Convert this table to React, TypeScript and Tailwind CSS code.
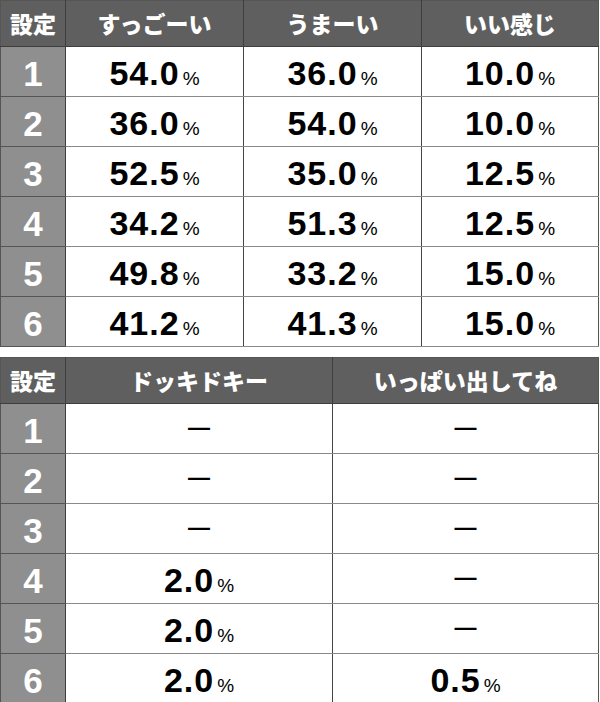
const topRows = [
  ["54.0", "36.0", "10.0"],
  ["36.0", "54.0", "10.0"],
  ["52.5", "35.0", "12.5"],
  ["34.2", "51.3", "12.5"],
  ["49.8", "33.2", "15.0"],
  ["41.2", "41.3", "15.0"],
];

const bottomRows = [
  [null, null],
  [null, null],
  [null, null],
  ["2.0", null],
  ["2.0", null],
  ["2.0", "0.5"],
];

const jp = "font-['Noto_Sans_CJK_JP',sans-serif]";
const num = "font-['Liberation_Sans',Arial,sans-serif]";

function Value({ v }: { v: string | null }) {
  if (!v) {
    return <span className={`${num} inline-block text-[22px] font-bold leading-none text-black`}>—</span>;
  }
  return (
    <span className="inline-flex items-baseline pt-[4px]">
      <span className={`${num} text-[34px] font-bold leading-none tracking-[0.03em] text-black`}>{v}</span>
      <span className={`${num} ml-[3px] text-[19px] leading-none text-black`}>%</span>
    </span>
  );
}

function HeaderCell({ label, last }: { label: string; last?: boolean }) {
  return (
    <th
      className={`h-[46px] border-b border-[#3e3e3e] bg-[#5f5f5f] p-0 text-center ${last ? "" : "border-r"} border-r-[#3e3e3e] ${jp} text-[23px] font-black text-white`}
    >
      {label}
    </th>
  );
}

function Table({ headers, rows, widths }: { headers: string[]; rows: (string | null)[][]; widths: string[] }) {
  return (
    <table className="w-[598px] table-fixed border-collapse border border-[#555]">
      <colgroup>
        <col className="w-[65px]" />
        {widths.map((w, i) => (
          <col key={i} className={w} />
        ))}
      </colgroup>
      <thead>
        <tr>
          <th className={`h-[46px] border-r border-b border-[#3e3e3e] bg-[#5f5f5f] p-0 text-center ${jp} text-[23px] font-black text-white`}>
            設定
          </th>
          {headers.map((h, i) => (
            <HeaderCell key={h} label={h} last={i === headers.length - 1} />
          ))}
        </tr>
      </thead>
      <tbody>
        {rows.map((row, i) => (
          <tr key={i} className="h-[50px]">
            <td className={`border-r border-b border-r-[#3e3e3e] border-b-[#555] bg-[#8f8f8f] p-0 pt-[3px] text-center ${num} text-[35px] font-bold leading-none text-white`}>
              {i + 1}
            </td>
            {row.map((v, j) => (
              <td
                key={j}
                className={`border-b border-b-[#8a8a8a] bg-white p-0 text-center ${j < row.length - 1 ? "border-r border-r-[#444]" : ""}`}
              >
                <Value v={v} />
              </td>
            ))}
          </tr>
        ))}
      </tbody>
    </table>
  );
}

export default function App() {
  return (
    <div className="flex h-[702px] w-[600px] flex-col gap-[10px] bg-white">
      <Table
        headers={["すっごーい", "うまーい", "いい感じ"]}
        rows={topRows}
        widths={["w-[178px]", "w-[178px]", "w-[177px]"]}
      />
      <Table headers={["ドッキドキー", "いっぱい出してね"]} rows={bottomRows} widths={["w-[267px]", "w-[266px]"]} />
    </div>
  );
}
